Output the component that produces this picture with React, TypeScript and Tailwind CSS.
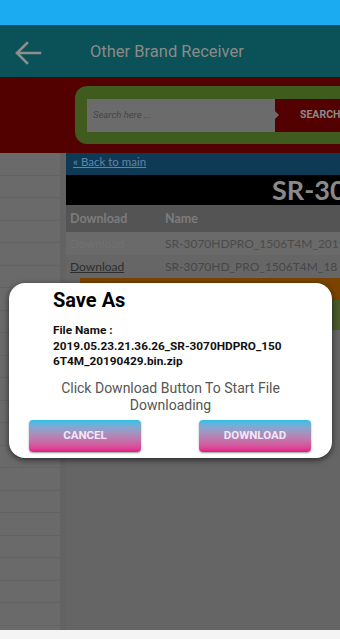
import React from "react";

const rows = Array.from({ length: 21 });

export default function App() {
  return (
    <div className="relative w-[340px] h-[639px] overflow-hidden bg-[#f2f2f2]" style={{ fontFamily: "Roboto, 'Noto Sans', sans-serif" }}>
      {/* status bar */}
      <div className="h-[25px] bg-[#1aabf1]" />
      {/* app bar */}
      <div className="h-[52px] bg-[#0b5158] flex items-center pt-[3px]">
        <svg width="28" height="24" viewBox="0 0 28 24" className="ml-[14px]">
          <path d="M26 12H3M13 2L3 12l10 10" stroke="#8e8e8e" strokeWidth="2.6" fill="none" strokeLinecap="square" />
        </svg>
        <span className="ml-[48px] text-[16.5px] text-[#8a8a8a]">Other Brand Receiver</span>
      </div>
      {/* red search area */}
      <div className="h-[76px] bg-[#520000] flex items-center pl-[75px]">
        <div className="flex-1 h-[58px] bg-[#3f5b1e] rounded-l-[12px] flex items-center pl-[12px]">
          <div className="w-[188px] h-[33px] bg-[#6b6b6b] flex items-center pl-[6px] text-[9.5px] italic text-[#454545]">Search here ...</div>
          <div className="relative flex-1 h-[33px] bg-[#520000] flex items-center pl-[25px] text-[10.5px] font-bold text-[#8a8a8a] whitespace-nowrap overflow-hidden">
            <div className="absolute left-0 top-[12px] w-0 h-0 border-y-[4px] border-y-transparent border-l-[4px] border-l-[#6b6b6b]" />
            SEARCH
          </div>
        </div>
      </div>
      {/* body */}
      <div className="flex h-[477px] bg-[#656565]">
        <div className="w-[60px] flex flex-col bg-[#6a6a6a]">
          {rows.map((_, i) => (
            <div key={i} className="h-[22.5px] border-b border-[#636363] shrink-0" />
          ))}
        </div>
        <div className="w-[6px] bg-[#636363]" />
        <div className="flex-1 flex flex-col overflow-hidden" style={{ fontFamily: "Lato, 'Open Sans', sans-serif" }}>
          <div className="h-[22px] bg-[#0f3a55] flex items-center pl-[7px] pb-[4px] text-[11.5px] text-[#5f86a8] underline">« Back to main</div>
          <div className="h-[30px] bg-black flex items-center pl-[206px] text-[27px] font-bold text-[#8a8a8a] whitespace-nowrap">SR-3070HDPRO</div>
          <div className="h-[27px] bg-[#545454] flex items-center pt-[2px] text-[12.5px] font-bold text-[#7c7c7c]">
            <span className="w-[99px] pl-[4px]">Download</span>
            <span>Name</span>
          </div>
          <div className="h-[23px] bg-[#6a6a6a] flex items-center text-[12px] whitespace-nowrap">
            <span className="w-[99px] pl-[4px] text-[#707070] shrink-0">Download</span>
            <span className="text-[#4a4a4a]">SR-3070HDPRO_1506T4M_2019</span>
          </div>
          <div className="h-[23px] bg-[#666666] flex items-center text-[12px] whitespace-nowrap">
            <span className="w-[99px] pl-[4px] text-[#2e2e2e] underline shrink-0">Download</span>
            <span className="text-[#474747]">SR-3070HD_PRO_1506T4M_18</span>
          </div>
          <div className="ml-[14px] h-[22px] bg-[#7a4300]" />
          <div className="ml-[14px] h-[30px] bg-[#4a5a2a]" />
        </div>
      </div>
      <div className="h-[9px] bg-[#f4f4f4]" />

      {/* dialog */}
      <div className="absolute left-[9px] top-[283px] w-[323px] h-[175px] bg-white rounded-[16px] shadow-[0_2px_6px_rgba(0,0,0,0.6)] flex flex-col">
        <div className="pl-[44px] pt-[4px] text-[20px] font-bold text-black leading-[26px]">Save As</div>
        <div className="pl-[44px] pt-[10px] w-[278px] text-[11.8px] font-bold text-[#111] leading-[15.5px] break-all">
          <div>File Name :</div>
          <div>2019.05.23.21.36.26_SR-3070HDPRO_1506T4M_20190429.bin.zip</div>
        </div>
        <div className="mt-[10px] px-[30px] text-center text-[14px] text-[#555] leading-[17px]">Click Download Button To Start File Downloading</div>
        <div className="mt-[6px] flex justify-between pl-[20px] pr-[21px]">
          <button className="w-[112px] h-[32px] rounded-[4px] bg-gradient-to-b from-[#20c0e6] to-[#e6108a] text-[11.5px] font-bold text-[#f0e8f8] shadow-[0_1px_2px_rgba(0,0,0,0.4)]">CANCEL</button>
          <button className="w-[112px] h-[32px] rounded-[4px] bg-gradient-to-b from-[#20c0e6] to-[#e6108a] text-[11.5px] font-bold text-[#f0e8f8] shadow-[0_1px_2px_rgba(0,0,0,0.4)]">DOWNLOAD</button>
        </div>
      </div>
    </div>
  );
}
